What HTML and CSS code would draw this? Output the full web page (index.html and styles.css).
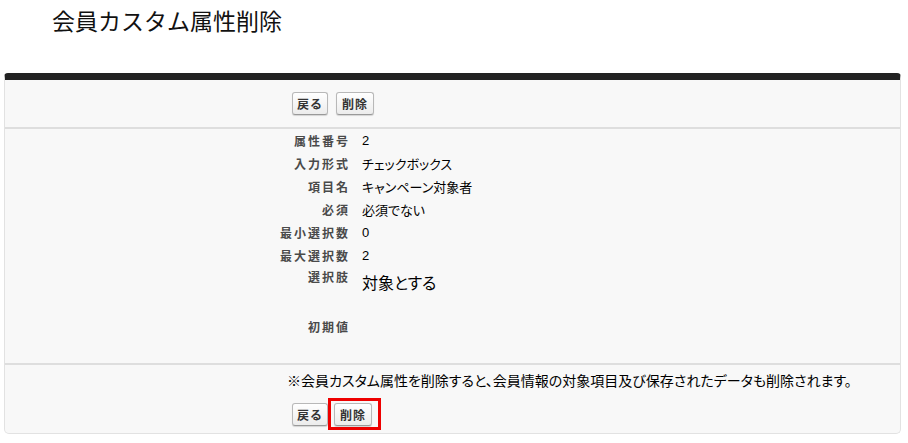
FILE: index.html
```html
<!DOCTYPE html>
<html lang="ja">
<head>
	<meta charset="UTF-8">
	<title>会員カスタム属性削除</title>
<link rel="stylesheet" href="styles.css">
</head>
<body>
	<h1 class="page_title">会員カスタム属性削除</h1>
	<div class="block">
		<div class="block_top">
			<button class="btn">戻る</button>
			<button class="btn btn_del">削除</button>
		</div>
		<div class="block_body">
			<div class="row">
				<div class="lbl">属性番号</div>
				<div class="val">2</div>
			</div>
			<div class="row">
				<div class="lbl">入力形式</div>
				<div class="val">チェックボックス</div>
			</div>
			<div class="row">
				<div class="lbl">項目名</div>
				<div class="val">キャンペーン対象者</div>
			</div>
			<div class="row">
				<div class="lbl">必須</div>
				<div class="val">必須でない</div>
			</div>
			<div class="row">
				<div class="lbl">最小選択数</div>
				<div class="val">0</div>
			</div>
			<div class="row">
				<div class="lbl">最大選択数</div>
				<div class="val">2</div>
			</div>
			<div class="row row_opts">
				<div class="lbl">選択肢</div>
				<div class="val"><span class="opt">対象とする</span></div>
			</div>
			<div class="row">
				<div class="lbl">初期値</div>
				<div class="val"></div>
			</div>
		</div>
		<div class="block_bottom">
			<p class="note">※会員カスタム属性を削除すると、会員情報の対象項目及び保存されたデータも削除されます。</p>
			<div class="actions">
				<button class="btn">戻る</button>
				<span class="mark"><button class="btn btn_del">削除</button></span>
			</div>
		</div>
	</div>
</body>
</html>
```

FILE: styles.css
```css
body{
	margin: 0;
	font-family: "Liberation Sans", "Noto Sans CJK JP", sans-serif;
	font-feature-settings: "palt";
	color: #000;
	background: #fff;
}
.page_title{
	margin: 0;
	padding: 6px 0 0 52px;
	height: 73px;
	box-sizing: border-box;
	font-size: 23px;
	font-weight: normal;
	font-feature-settings: normal;
	line-height: 32px;
	color: #111;
}
.block{
	margin: 0 7px 0 4px;
	background: #f8f8f8;
	border: 1px solid #e2e2e2;
	border-top: 7px solid #222;
	border-radius: 4px 4px 5px 5px;
}
.block_top{
	display: flex;
	gap: 8px;
	padding: 12px 0 12px 287px;
	border-bottom: 2px solid #dedede;
}
.btn{
	height: 23px;
	padding: 0 4px;
	font-family: "Liberation Sans", "Noto Sans CJK JP", sans-serif;
	font-size: 12px;
	font-weight: bold;
	letter-spacing: 1px;
	color: #333;
	background: linear-gradient(#fff, #ececec);
	border: 1px solid #b8b8b8;
	border-bottom-color: #999;
	border-radius: 3px;
	box-shadow: 0 1px 1px rgba(0,0,0,0.15);
}
.btn_del{
	padding: 0 5px;
}
.block_body{
	padding: 0 0 25px;
	border-bottom: 2px solid #dedede;
}
.row{
	display: grid;
	grid-template-columns: 345px 1fr;
	column-gap: 12px;
	height: 23px;
	align-items: center;
}
.row_opts{
	height: 48px;
	align-items: start;
}
.row_opts .lbl,
.row_opts .val{
	line-height: 23px;
}
.lbl{
	text-align: right;
	font-size: 12px;
	font-weight: bold;
	letter-spacing: 2px;
	color: #4a4a4a;
}
.val{
	font-size: 13px;
}
.opt{
	display: block;
	margin-top: 5px;
	font-size: 16px;
}
.block_bottom{
	padding: 6px 0 3px 282px;
}
.note{
	margin: 0;
	font-size: 14px;
	line-height: 20px;
}
.actions{
	display: flex;
	align-items: center;
	margin-top: 7px;
	padding-left: 5px;
}
.mark{
	display: inline-flex;
	margin-left: 0;
	padding: 2px 6px 1px 3px;
	border: 3px solid #e00;
}
```
